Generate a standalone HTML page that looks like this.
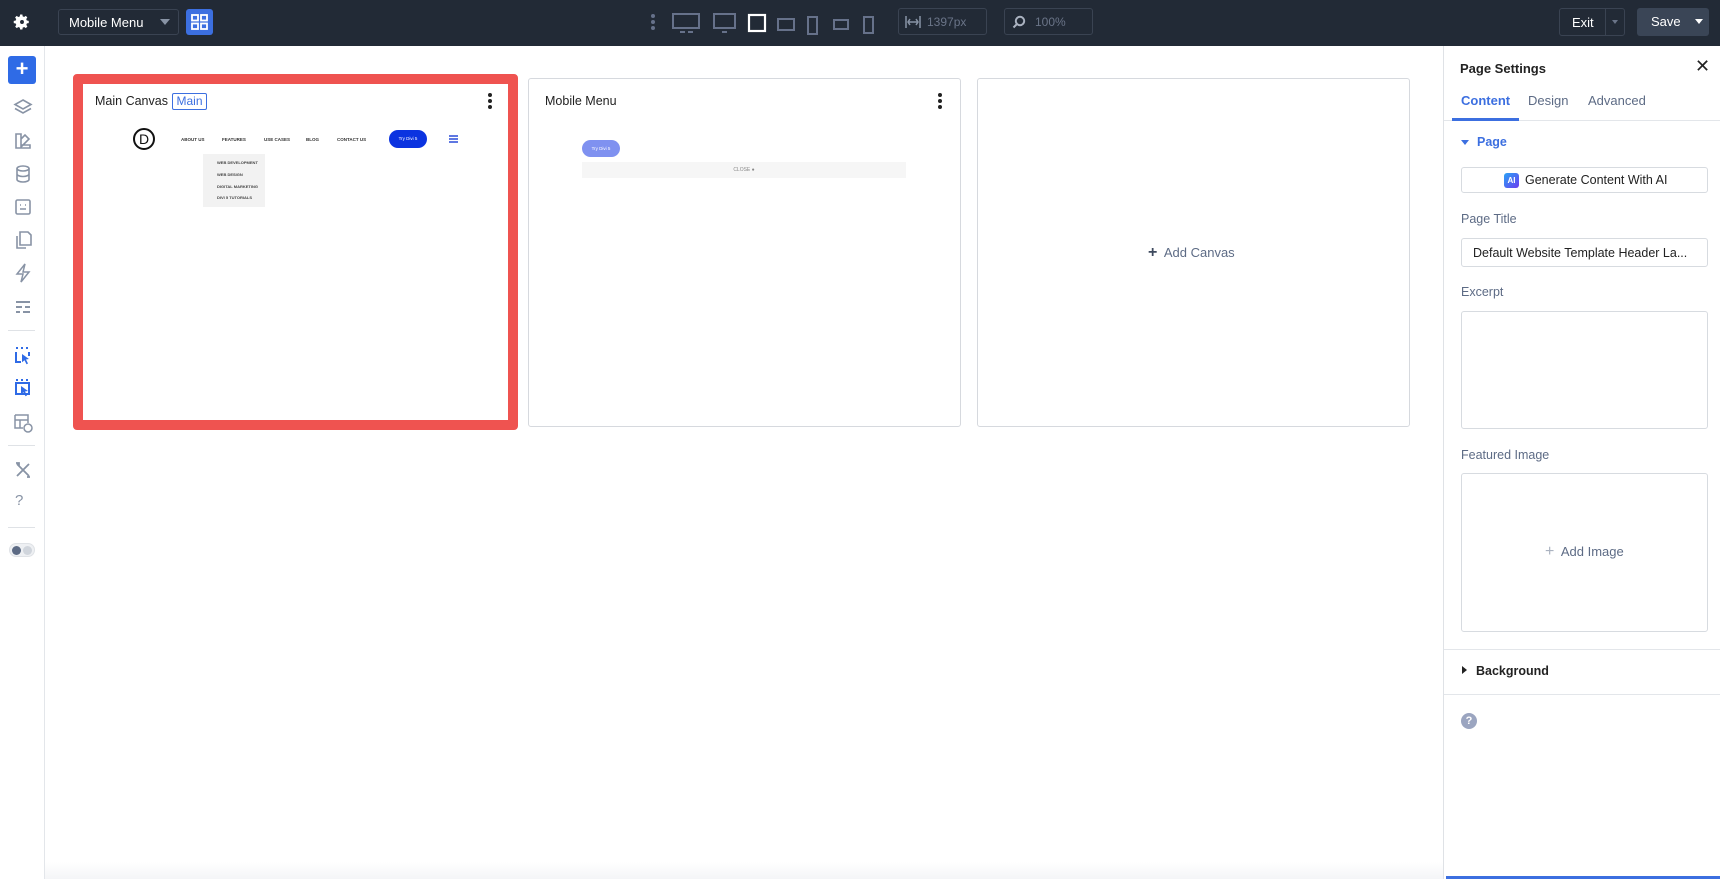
<!DOCTYPE html>
<html><head><meta charset="utf-8"><style>
*{box-sizing:border-box;margin:0;padding:0}
body{width:1720px;height:879px;overflow:hidden;background:#fff;font-family:"Liberation Sans",Arial,sans-serif;position:relative}
.abs{position:absolute}
#top{left:0;top:0;width:1720px;height:46px;background:#222a36}
.tb{position:absolute;border:1px solid #3a4352;border-radius:3px}
#side{left:0;top:46px;width:45px;height:833px;background:#fff;border-right:1px solid #e3e6ea}
.si{position:absolute;left:13px;width:20px;height:20px}
.sdiv{position:absolute;left:8px;width:27px;height:1px;background:#dfe2e6}
.card{position:absolute;background:#fff;border:1px solid #d6d9de;border-radius:3px}
.ttl{position:absolute;font-size:12.5px;color:#222;font-weight:500}
.dots{position:absolute;width:4px}
.dots i{display:block;width:4px;height:4px;border-radius:2px;background:#222;margin-bottom:2px}
#panel{left:1443px;top:46px;width:277px;height:833px;background:#fff;border-left:1px solid #dfe2e6}
.lbl{position:absolute;left:17px;font-size:12.5px;color:#5d6b85}
.box{position:absolute;left:17px;width:247px;border:1px solid #d7dbe0;border-radius:3px;background:#fff}
.nav{position:absolute;top:137px;font-size:4.5px;color:#333;font-weight:bold}
.dd{position:absolute;font-size:4px;color:#444;font-weight:bold;left:14px}
</style></head><body>
<div id="top" class="abs">
  <svg class="abs" style="left:13px;top:13px" width="18" height="18" viewBox="0 0 24 24"><path fill="#fff" d="M12 8.5a3.5 3.5 0 1 0 0 7 3.5 3.5 0 0 0 0-7zm9 5v-3l-2.6-.5a7 7 0 0 0-.8-1.9l1.5-2.2-2.1-2.1-2.2 1.5a7 7 0 0 0-1.9-.8L12.5 2h-3l-.5 2.6a7 7 0 0 0-1.9.8L4.9 3.9 2.8 6l1.5 2.2a7 7 0 0 0-.8 1.9L1 10.5v3l2.6.5c.2.7.4 1.3.8 1.9l-1.5 2.2 2.1 2.1 2.2-1.5c.6.4 1.2.6 1.9.8l.4 2.5h3l.5-2.6c.7-.2 1.3-.4 1.9-.8l2.2 1.5 2.1-2.1-1.5-2.2c.4-.6.6-1.2.8-1.9z"/><circle cx="12" cy="12" r="2.6" fill="#222a36"/></svg>
  <div class="tb" style="left:58px;top:9px;width:121px;height:26px;"><span class="abs" style="left:10px;top:5px;color:#fff;font-size:13px">Mobile Menu</span><span class="abs" style="left:101px;top:9px;border:5px solid transparent;border-top:6px solid #8893a5;border-bottom:0"></span></div>
  <div class="abs" style="left:186px;top:9px;width:27px;height:26px;background:#3c6fe0;border-radius:3px">
    <svg class="abs" style="left:5px;top:5px" width="17" height="16" viewBox="0 0 17 16"><g fill="none" stroke="#fff" stroke-width="1.8"><rect x="1" y="1" width="6" height="5.5"/><rect x="10" y="1" width="6" height="5.5"/><rect x="1" y="9.5" width="6" height="5.5"/><rect x="10" y="9.5" width="6" height="5.5"/></g></svg>
  </div>
  <svg class="abs" style="left:640px;top:5px" width="260" height="36" viewBox="0 0 260 36"><g fill="#66718a"><circle cx="13" cy="11" r="2"/><circle cx="13" cy="17" r="2"/><circle cx="13" cy="23" r="2"/></g><g fill="none" stroke="#66718a" stroke-width="2"><rect x="33" y="9" width="26" height="14"/><path d="M40 27h5M48 27h5"/><rect x="74" y="9" width="21" height="14"/><path d="M82 27h5"/><rect x="138" y="14" width="16" height="11"/><rect x="168" y="12" width="9" height="17"/><rect x="194" y="15" width="14" height="9"/><rect x="224" y="12" width="9" height="16"/></g><rect x="109" y="10" width="16" height="16" fill="none" stroke="#fff" stroke-width="2.2"/></svg>
  <div class="tb" style="left:898px;top:8px;width:89px;height:27px"><svg class="abs" style="left:6px;top:7px" width="16" height="12" viewBox="0 0 16 12"><path d="M1 0v12M15 0v12M3 6h10M5 3L3 6l2 3M11 3l2 3-2 3" stroke="#8893a5" stroke-width="1.5" fill="none"/></svg><span class="abs" style="left:28px;top:6px;color:#6a7488;font-size:12px">1397px</span></div>
  <div class="tb" style="left:1004px;top:8px;width:89px;height:27px"><svg class="abs" style="left:7px;top:6px" width="14" height="14" viewBox="0 0 14 14"><circle cx="8" cy="6" r="4.2" fill="none" stroke="#aab2c0" stroke-width="2"/><path d="M5 9l-3.5 3.5" stroke="#aab2c0" stroke-width="2"/></svg><span class="abs" style="left:30px;top:6px;color:#6a7488;font-size:12px">100%</span></div>
  <div class="tb" style="left:1559px;top:8px;width:66px;height:28px"><span class="abs" style="left:12px;top:6px;color:#fff;font-size:13px">Exit</span><span class="abs" style="left:45px;top:0;width:1px;height:26px;background:#3a4352"></span><span class="abs" style="left:52px;top:11px;border:3px solid transparent;border-top:4px solid #6a7488;border-bottom:0"></span></div>
  <div class="abs" style="left:1637px;top:8px;width:72px;height:28px;background:#3a4556;border-radius:3px"><span class="abs" style="left:14px;top:6px;color:#fff;font-size:13px">Save</span><span class="abs" style="left:58px;top:11px;border:4px solid transparent;border-top:5px solid #fff;border-bottom:0"></span></div>
</div>

<div id="side" class="abs">
  <div class="abs" style="left:8px;top:10px;width:28px;height:28px;background:#2f6be6;border-radius:3px;color:#fff;font-size:22px;line-height:26px;text-align:center;font-weight:bold">+</div>
  <svg class="si" style="top:52px" viewBox="0 0 20 20"><path d="M10 2l8 4.5-8 4.5-8-4.5zM2 10.5l8 4.5 8-4.5" fill="none" stroke="#8893a5" stroke-width="1.6"/></svg>
  <svg class="si" style="top:85px" viewBox="0 0 20 20"><path d="M3 3h5v14H3zM8 8l4-4 4 4-8 8M8 14h9v3H8" fill="none" stroke="#8893a5" stroke-width="1.6"/></svg>
  <svg class="si" style="top:118px" viewBox="0 0 20 20"><ellipse cx="10" cy="4.5" rx="6" ry="2.5" fill="none" stroke="#8893a5" stroke-width="1.6"/><path d="M4 4.5v11c0 1.4 2.7 2.5 6 2.5s6-1.1 6-2.5v-11M4 10c0 1.4 2.7 2.5 6 2.5s6-1.1 6-2.5" fill="none" stroke="#8893a5" stroke-width="1.6"/></svg>
  <svg class="si" style="top:151px" viewBox="0 0 20 20"><rect x="3" y="3" width="14" height="14" rx="1.5" fill="none" stroke="#8893a5" stroke-width="1.6"/><path d="M7 8h1M12 8h1M7 12h6" stroke="#8893a5" stroke-width="1.6"/></svg>
  <svg class="si" style="top:184px" viewBox="0 0 20 20"><path d="M7 2h8l3 3v10H7zM4 6v12h9" fill="none" stroke="#8893a5" stroke-width="1.6"/></svg>
  <svg class="si" style="top:217px" viewBox="0 0 20 20"><path d="M12 1L4 11h6l-2 8 8-10h-6z" fill="none" stroke="#8893a5" stroke-width="1.5"/></svg>
  <svg class="si" style="top:251px" viewBox="0 0 20 20"><path d="M3 5h14M3 10h6M12 10h5M3 15h4M10 15h7" stroke="#8893a5" stroke-width="2"/></svg>
  <div class="sdiv" style="top:284px"></div>
  <svg class="si" style="top:300px" viewBox="0 0 20 20"><path d="M3 2h2M8 2h2M13 2h2" stroke="#2f6be6" stroke-width="2"/><path d="M3 6v10h5M16 6v4" fill="none" stroke="#2f6be6" stroke-width="2"/><path d="M9 8l7 5-3 .5 2 4-1.5.7-2-4-2.5 2z" fill="#2f6be6"/></svg>
  <svg class="si" style="top:332px" viewBox="0 0 20 20"><path d="M3 2h2M8 2h2M13 2h2" stroke="#2f6be6" stroke-width="2"/><rect x="3" y="5" width="13" height="11" fill="none" stroke="#2f6be6" stroke-width="2"/><path d="M8 8l7 5-3 .5 2 4-1.5.7-2-4-2.5 2z" fill="#2f6be6"/></svg>
  <svg class="si" style="top:367px" viewBox="0 0 20 20"><path d="M2 2h13v8M2 2v13h8M2 7h13M7 7v8" fill="none" stroke="#8893a5" stroke-width="1.5"/><circle cx="15" cy="15" r="4" fill="none" stroke="#8893a5" stroke-width="1.5"/></svg>
  <div class="sdiv" style="top:399px"></div>
  <svg class="si" style="top:414px" viewBox="0 0 20 20"><path d="M4 4l12 12M16 4L4 16M3 3l3 0 0 3M14 17l3 0" fill="none" stroke="#8893a5" stroke-width="1.8"/></svg>
  <div class="abs" style="left:15px;top:446px;color:#8893a5;font-size:15px">?</div>
  <div class="sdiv" style="top:481px"></div>
  <div class="abs" style="left:9px;top:497px;width:26px;height:14px;border-radius:7px;background:#eef0f3;border:1px solid #dfe2e6"><span class="abs" style="left:2px;top:2px;width:9px;height:9px;border-radius:5px;background:#5d6b85"></span><span class="abs" style="left:13px;top:2px;width:9px;height:9px;border-radius:5px;background:#d0d5dc"></span></div>
</div>

<!-- main canvas -->
<div class="abs" style="left:73px;top:74px;width:445px;height:356px;border:10px solid #ef5350;border-radius:4px;background:#fff"></div>
<div class="ttl" style="left:95px;top:94px">Main Canvas</div>
<div class="abs" style="left:172px;top:93px;width:35px;height:17px;border:1px solid #3c6fe0;border-radius:2px;color:#3c6fe0;font-size:12px;text-align:center;line-height:15px">Main</div>
<div class="dots" style="left:488px;top:93px"><i></i><i></i><i></i></div>
<div class="abs" style="left:133px;top:128px;width:22px;height:22px;border:2px solid #111;border-radius:50%;font-size:14px;text-align:center;line-height:18px;color:#111">D</div>
<div class="nav" style="left:181px">ABOUT US</div>
<div class="nav" style="left:222px">FEATURES</div>
<div class="nav" style="left:264px">USE CASES</div>
<div class="nav" style="left:306px">BLOG</div>
<div class="nav" style="left:337px">CONTACT US</div>
<div class="abs" style="left:389px;top:130px;width:38px;height:18px;border-radius:9px;background:#0b33e0;color:#fff;font-size:4.5px;text-align:center;line-height:18px">Try Divi 5</div>
<svg class="abs" style="left:449px;top:135px" width="9" height="8" viewBox="0 0 9 8"><path d="M0 1h9M0 4h9M0 7h9" stroke="#2a4bd8" stroke-width="1.4"/></svg>
<div class="abs" style="left:203px;top:154px;width:62px;height:53px;background:#f2f2f2">
  <div class="dd" style="top:6px">WEB DEVELOPMENT</div><div class="dd" style="top:18px">WEB DESIGN</div><div class="dd" style="top:30px">DIGITAL MARKETING</div><div class="dd" style="top:41px">DIVI 5 TUTORIALS</div>
</div>

<!-- mobile menu card -->
<div class="card" style="left:528px;top:78px;width:433px;height:349px"></div>
<div class="ttl" style="left:545px;top:94px">Mobile Menu</div>
<div class="dots" style="left:938px;top:93px"><i></i><i></i><i></i></div>
<div class="abs" style="left:582px;top:140px;width:38px;height:17px;border-radius:9px;background:#7f91f0;color:#fff;font-size:4.5px;text-align:center;line-height:17px">Try Divi 5</div>
<div class="abs" style="left:582px;top:162px;width:324px;height:16px;background:#f6f6f6;color:#888;font-size:5px;text-align:center;line-height:16px">CLOSE ●</div>

<!-- add canvas -->
<div class="card" style="left:977px;top:78px;width:433px;height:349px"></div>
<div class="abs" style="left:1148px;top:244px;font-size:13px;color:#5d6b85"><b style="font-size:16px;color:#3e4a5e">+</b>&nbsp; Add Canvas</div>

<div class="abs" style="left:45px;top:862px;width:1398px;height:17px;background:linear-gradient(#fff,#f4f5f7)"></div>

<div id="panel" class="abs">
  <div class="abs" style="left:16px;top:15px;font-size:13px;color:#222;font-weight:600">Page Settings</div>
  <div class="abs" style="left:251px;top:10px;font-size:18px;color:#222;line-height:20px">✕</div>
  <div class="abs" style="left:17px;top:47px;font-size:13px;color:#3c6fe0;font-weight:600">Content</div>
  <div class="abs" style="left:84px;top:47px;font-size:13px;color:#5d6b85">Design</div>
  <div class="abs" style="left:144px;top:47px;font-size:13px;color:#5d6b85">Advanced</div>
  <div class="abs" style="left:0;top:74px;width:277px;height:1px;background:#e3e6ea"></div>
  <div class="abs" style="left:8px;top:72px;width:67px;height:3px;background:#3c6fe0"></div>
  <div class="abs" style="left:17px;top:94px;border:4px solid transparent;border-top:5px solid #3c6fe0;border-bottom:0"></div>
  <div class="abs" style="left:33px;top:89px;font-size:12.5px;color:#3c6fe0;font-weight:600">Page</div>
  <div class="box" style="top:121px;height:26px"><span class="abs" style="left:42px;top:5px;width:15px;height:15px;border-radius:3px;background:linear-gradient(135deg,#29a3f5,#6a3cf0);color:#fff;font-size:8px;font-weight:bold;text-align:center;line-height:15px">AI</span><span class="abs" style="left:63px;top:5px;font-size:12.5px;color:#222">Generate Content With AI</span></div>
  <div class="lbl" style="top:166px">Page Title</div>
  <div class="box" style="top:192px;height:29px"><span class="abs" style="left:11px;top:7px;font-size:12.5px;color:#222">Default Website Template Header La...</span></div>
  <div class="lbl" style="top:239px">Excerpt</div>
  <div class="box" style="top:265px;height:118px"></div>
  <div class="lbl" style="top:402px">Featured Image</div>
  <div class="box" style="top:427px;height:159px"><span class="abs" style="left:83px;top:69px;font-size:13px;color:#5d6b85"><span style="color:#aab2c0;font-size:16px">+</span>&nbsp; Add Image</span></div>
  <div class="abs" style="left:0;top:603px;width:277px;height:1px;background:#e3e6ea"></div>
  <div class="abs" style="left:18px;top:620px;border:4px solid transparent;border-left:5px solid #222;border-right:0"></div>
  <div class="abs" style="left:32px;top:618px;font-size:12.5px;color:#222;font-weight:600">Background</div>
  <div class="abs" style="left:0;top:648px;width:277px;height:1px;background:#e3e6ea"></div>
  <div class="abs" style="left:17px;top:667px;width:16px;height:16px;border-radius:50%;background:#9ba5c0;color:#fff;font-size:11px;font-weight:bold;text-align:center;line-height:16px">?</div>
  <div class="abs" style="left:2px;top:830px;width:275px;height:3px;background:#3c6fe0"></div>
</div>
</body></html>
